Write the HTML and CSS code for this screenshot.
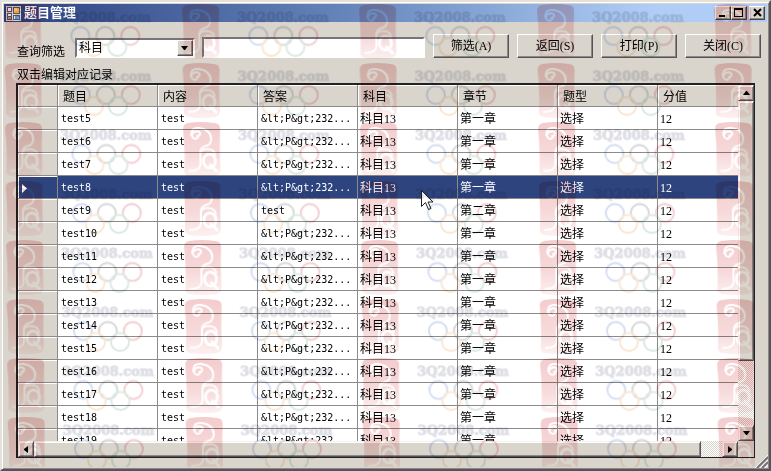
FILE: index.html
```html
<!DOCTYPE html>
<html lang="zh-CN">
<head>
    <meta charset="UTF-8">
    <meta name="viewport" content="width=device-width, initial-scale=1.0">
    <title>题目管理</title>
    <link rel="stylesheet" href="styles.css">
</head>
<body>
<div class="window">
    <div class="title-bar">
        <svg class="app-icon" width="15" height="15" viewBox="0 0 15 15" shape-rendering="crispEdges">
            <path fill="#d9d5cd" d="M0 0h15v15H0z"/>
            <path fill="#4a5a80" d="M1 1h5v5H1zM7 1h7v7H7zM1 7h5v7H1zM7 9h7v5H7z"/>
            <path fill="#ffffff" d="M2 2h3v3H2zM2 8h3v2H2zM8 10h5v3H8z"/>
            <path fill="#f0b830" d="M8 2h5v5H8z"/>
            <path fill="#f8e090" d="M8 2h3v2H8z"/>
            <path fill="#d09828" d="M2 11h3v2H2z"/>
            <path fill="#70a8e8" d="M9 10h4v3H9z"/>
        </svg>
        <h1 class="title">题目管理</h1>
        <button class="caption-btn" type="button" aria-label="最小化">
            <svg width="12" height="10" shape-rendering="crispEdges"><path d="M2 7h6v2H2z"/></svg>
        </button>
        <button class="caption-btn" type="button" aria-label="最大化">
            <svg width="12" height="10" shape-rendering="crispEdges"><path fill-rule="evenodd" d="M1 0h9v9H1zM2 2v6h7V2z"/></svg>
        </button>
        <button class="caption-btn close-btn" type="button" aria-label="关闭">
            <svg width="12" height="10"><path d="M3 1l7 7M10 1l-7 7" fill="none" stroke="#000" stroke-width="2"/></svg>
        </button>
    </div>

    <form class="toolbar">
        <label class="filter-label" for="field">查询筛选</label>
        <span class="select-box">
            <select id="field" class="field-select">
                <option>科目</option>
            </select>
            <span class="select-arrow"><svg width="8" height="4"><path d="M0 0h7L4 4H3z"/></svg></span>
        </span>
        <input class="keyword" type="text" aria-label="查询内容">
        <button class="tool-btn" type="button">筛选(A)</button>
        <button class="tool-btn" type="button">返回(S)</button>
        <button class="tool-btn" type="button">打印(P)</button>
        <button class="tool-btn" type="button">关闭(C)</button>
    </form>

    <p class="hint">双击编辑对应记录</p>

    <div class="grid">
        <div class="grid-view">
            <table class="records">
                <colgroup>
                    <col class="col-mark"><col class="col-data"><col class="col-data"><col class="col-data"><col class="col-data"><col class="col-data"><col class="col-data"><col>
                </colgroup>
                <thead>
                    <tr><th></th><th>题目</th><th>内容</th><th>答案</th><th>科目</th><th>章节</th><th>题型</th><th>分值</th></tr>
                </thead>
                <tbody>
                    <tr><th></th><td class="en">test5</td><td class="en">test</td><td class="en">&amp;lt;P&amp;gt;232...</td><td>科目13</td><td>第一章</td><td>选择</td><td>12</td></tr>
                    <tr><th></th><td class="en">test6</td><td class="en">test</td><td class="en">&amp;lt;P&amp;gt;232...</td><td>科目13</td><td>第一章</td><td>选择</td><td>12</td></tr>
                    <tr><th></th><td class="en">test7</td><td class="en">test</td><td class="en">&amp;lt;P&amp;gt;232...</td><td>科目13</td><td>第一章</td><td>选择</td><td>12</td></tr>
                    <tr class="selected"><th><svg class="row-arrow" width="5" height="9"><path fill="#fff" d="M0 0l5 4.500L0 9z"/></svg></th><td class="en">test8</td><td class="en">test</td><td class="en">&amp;lt;P&amp;gt;232...</td><td>科目13</td><td>第一章</td><td>选择</td><td>12</td></tr>
                    <tr><th></th><td class="en">test9</td><td class="en">test</td><td class="en">test</td><td>科目13</td><td>第二章</td><td>选择</td><td>12</td></tr>
                    <tr><th></th><td class="en">test10</td><td class="en">test</td><td class="en">&amp;lt;P&amp;gt;232...</td><td>科目13</td><td>第一章</td><td>选择</td><td>12</td></tr>
                    <tr><th></th><td class="en">test11</td><td class="en">test</td><td class="en">&amp;lt;P&amp;gt;232...</td><td>科目13</td><td>第一章</td><td>选择</td><td>12</td></tr>
                    <tr><th></th><td class="en">test12</td><td class="en">test</td><td class="en">&amp;lt;P&amp;gt;232...</td><td>科目13</td><td>第一章</td><td>选择</td><td>12</td></tr>
                    <tr><th></th><td class="en">test13</td><td class="en">test</td><td class="en">&amp;lt;P&amp;gt;232...</td><td>科目13</td><td>第一章</td><td>选择</td><td>12</td></tr>
                    <tr><th></th><td class="en">test14</td><td class="en">test</td><td class="en">&amp;lt;P&amp;gt;232...</td><td>科目13</td><td>第一章</td><td>选择</td><td>12</td></tr>
                    <tr><th></th><td class="en">test15</td><td class="en">test</td><td class="en">&amp;lt;P&amp;gt;232...</td><td>科目13</td><td>第一章</td><td>选择</td><td>12</td></tr>
                    <tr><th></th><td class="en">test16</td><td class="en">test</td><td class="en">&amp;lt;P&amp;gt;232...</td><td>科目13</td><td>第一章</td><td>选择</td><td>12</td></tr>
                    <tr><th></th><td class="en">test17</td><td class="en">test</td><td class="en">&amp;lt;P&amp;gt;232...</td><td>科目13</td><td>第一章</td><td>选择</td><td>12</td></tr>
                    <tr><th></th><td class="en">test18</td><td class="en">test</td><td class="en">&amp;lt;P&amp;gt;232...</td><td>科目13</td><td>第一章</td><td>选择</td><td>12</td></tr>
                    <tr><th></th><td class="en">test19</td><td class="en">test</td><td class="en">&amp;lt;P&amp;gt;232...</td><td>科目13</td><td>第一章</td><td>选择</td><td>12</td></tr>
                </tbody>
            </table>
        </div>
        <div class="scroll scroll-v">
            <button class="scroll-btn" type="button" aria-label="向上"><svg width="7" height="4"><path d="M0 4L3 0h1l3 4z"/></svg></button>
            <div class="thumb"></div>
            <div class="track"></div>
            <button class="scroll-btn" type="button" aria-label="向下"><svg width="7" height="4"><path d="M0 0h7L4 4H3z"/></svg></button>
        </div>
        <div class="scroll scroll-h">
            <button class="scroll-btn" type="button" aria-label="向左"><svg width="4" height="7"><path d="M4 0v7L0 4V3z"/></svg></button>
            <div class="thumb"></div>
            <div class="track"></div>
            <button class="scroll-btn" type="button" aria-label="向右"><svg width="4" height="7"><path d="M0 0v7l4-3V3z"/></svg></button>
        </div>
    </div>

    <svg class="size-grip" width="14" height="14">
        <path d="M1 14L14 1M6 14l8-8M11 14l3-3" stroke="#fff" stroke-width="1"/>
        <path d="M3 14L14 3M8 14l6-6" stroke="#77747c" stroke-width="2"/>
    </svg>

    <svg class="cursor" width="12" height="21" viewBox="0 0 12 21">
        <path d="M.5.5v16l4-4 3 7 2.500-1-3-6.500h5z" fill="#fff" stroke="#222"/>
    </svg>

    <!-- repeated site mark, laid over everything -->
    <svg class="watermark" width="100%" height="100%" aria-hidden="true">
        <defs>
            <linearGradient id="seal" x1="0" y1="0" x2="0" y2="1">
                <stop offset="0" stop-color="#f4cccd"/>
                <stop offset="0.6" stop-color="#f7dadb"/>
                <stop offset="1" stop-color="#fdf0f0"/>
            </linearGradient>
            <g id="mark">
                <path fill="url(#seal)" d="M5 1Q18-1 31 1Q37 1 37 7Q36 28 37 47Q37 53 32 54Q18 56 5 54Q0 53 1 47Q2 28 0 7Q0 2 5 1z"/>
                <g fill="none" stroke="#fff" stroke-linecap="round">
                    <path stroke-width="2" d="M14 14Q17 14 17 11Q15 8 11 10Q7 13 10 16Q13 18 15 15"/>
                    <path stroke-width="2" d="M8 13Q8 5 16 6Q28 8 28 17Q28 23 22 24Q16 26 17 33L17 43Q16 49 6 49"/>
                    <path stroke-width="2" d="M17 31Q18 27 24 27Q31 27 32 33"/>
                    <ellipse stroke-width="3" cx="26" cy="39" rx="6" ry="7"/>
                    <path stroke-width="3" d="M27 43l6 6"/>
                </g>
                <text class="mark-text" x="55" y="18">3Q2008.com</text>
                <g fill="none" stroke-width="2">
                    <circle cx="76" cy="32" r="9" stroke="#d6dff3"/>
                    <circle cx="101" cy="32" r="9" stroke="#dadadd"/>
                    <circle cx="126" cy="32" r="9" stroke="#f4d0d3"/>
                    <circle cx="89" cy="43" r="9" stroke="#fae8d6"/>
                    <circle cx="113" cy="43" r="9" stroke="#dcebe2"/>
                </g>
            </g>
            <pattern id="marks" x="4" y="4" width="355" height="59" patternUnits="userSpaceOnUse" patternTransform="skewX(0.5)">
                <use href="#mark"/>
                <use href="#mark" x="178"/>
            </pattern>
        </defs>
        <rect y="4" width="100%" height="100%" fill="url(#marks)"/>
    </svg>
</div>
</body>
</html>
```
FILE: styles.css
```css
* {
    box-sizing: border-box;
}
body {
    margin: 0;
    font-family: "Liberation Serif", "Noto Sans CJK SC", serif;
    font-size: 12px;
    line-height: 14px;
    color: #000;
}
button, input, select {
    font: inherit;
    color: inherit;
    margin: 0;
    padding: 0;
    border-radius: 0;
}
.window {
    position: relative;
    display: flex;
    flex-direction: column;
    height: 100vh;
    padding: 2px;
    overflow: hidden;
    background: #d9d5cd;
    border: 2px solid;
    border-color: #e4e1da #55545a #55545a #e4e1da;
    box-shadow: inset 1px 1px #fff, inset -1px -1px #8c8a86;
}

/* title bar */
.title-bar {
    display: flex;
    align-items: center;
    height: 18px;
    padding: 0 2px;
    background: linear-gradient(to right, #2c4280, #6585bb 45%, #b0cef5 85%);
}
.app-icon {
    margin-right: 3px;
}
.title {
    flex: 1;
    margin: 0;
    font-size: 13px;
    line-height: 18px;
    color: #fff;
}
.caption-btn {
    display: flex;
    width: 16px;
    height: 14px;
    background: #d9d5cd;
    border: 1px solid;
    border-color: #fff #444 #444 #fff;
    box-shadow: inset -1px -1px #8c8a86;
}
.caption-btn svg {
    margin: 1px;
}
.close-btn {
    margin-left: 2px;
}

/* filter row */
.toolbar {
    display: flex;
    align-items: flex-end;
    padding: 12px 6px 0 13px;
}
.filter-label {
    width: 58px;
    line-height: 12px;
}
.select-box {
    position: relative;
    width: 120px;
    height: 20px;
    margin-right: 7px;
}
.field-select {
    appearance: none;
    display: block;
    width: 100%;
    height: 100%;
    padding-left: 2px;
}
.field-select, .keyword {
    background: #fff;
    border: 2px solid;
    border-color: #77757a #fff #fff #77757a;
    outline: none;
}
.select-arrow {
    position: absolute;
    top: 2px;
    right: 2px;
    bottom: 2px;
    display: flex;
    align-items: center;
    justify-content: center;
    width: 16px;
    background: #d9d5cd;
    border: 1px solid;
    border-color: #fff #555 #555 #fff;
    box-shadow: inset -1px -1px #8c8a86;
    pointer-events: none;
}
.keyword {
    flex: 1;
    min-width: 0;
    height: 21px;
}
.tool-btn {
    width: 76px;
    height: 24px;
    margin-left: 8px;
    background: #d9d5cd;
    border: 1px solid;
    border-color: #fff #55545a #55545a #fff;
    box-shadow: inset -1px -1px #8c8a86;
}
.hint {
    margin: 10px 13px 1px;
    line-height: 14px;
}

/* data grid */
.grid {
    flex: 1;
    display: grid;
    grid-template-columns: 1fr 16px;
    grid-template-rows: 1fr 16px;
    min-height: 0;
    margin: 0 12px 9px 12px;
    border: 2px solid #222;
    border-right-width: 1px;
    border-bottom-width: 1px;
}
.grid-view {
    min-height: 0;
    overflow: hidden;
    background: #fff;
}
.records {
    width: 100%;
    table-layout: fixed;
    border-collapse: separate;
    border-spacing: 0;
}
.col-mark {
    width: 40px;
}
.col-data {
    width: 100px;
}
.records th, .records td {
    height: 23px;
    padding: 2px 2px 0;
    text-align: left;
    font-weight: normal;
    white-space: nowrap;
    overflow: hidden;
    border-right: 1px solid #8c8a8a;
    border-bottom: 1px solid #8c8a8a;
}
.records th {
    background: #d9d5cd;
    box-shadow: inset 1px 1px #fff;
}
.records thead th {
    height: 22px;
    padding-left: 5px;
}
.records tr > :last-child {
    border-right: 0;
}
.records .en {
    padding-left: 3px;
    font-family: "DejaVu Sans Mono", monospace;
    font-size: 10px;
}
.records .selected td, .records .selected th {
    background: #2e447f;
    color: #fff;
}
.row-arrow {
    display: block;
    margin-left: 2px;
}

/* scroll bars */
.scroll {
    display: flex;
    background: #d9d5cd;
}
.scroll-v {
    flex-direction: column;
}
.scroll-btn {
    display: flex;
    align-items: center;
    justify-content: center;
    flex: none;
    width: 16px;
    height: 16px;
}
.scroll-btn, .thumb {
    background: #d9d5cd;
    border: 1px solid;
    border-color: #f4f2ee #55545a #55545a #f4f2ee;
    box-shadow: inset 1px 1px #fff, inset -1px -1px #8c8a86;
}
.track {
    background: repeating-conic-gradient(#fff 0 25%, #d9d5cd 0 50%) 0 0 / 2px 2px;
}
.scroll-v .thumb {
    flex: 80;
}
.scroll-v .track {
    flex: 20;
}
.scroll-h .thumb {
    flex: 97;
}
.scroll-h .track {
    flex: 3;
}

/* things floating over the window */
.size-grip {
    position: absolute;
    right: 1px;
    bottom: 1px;
}
.cursor {
    position: absolute;
    left: 419px;
    top: 188px;
}
.watermark {
    position: absolute;
    top: -2px;
    left: -2px;
    mix-blend-mode: multiply;
    pointer-events: none;
}
.mark-text {
    font-family: "DejaVu Serif", serif;
    font-size: 13px;
    font-weight: bold;
    fill: #dfe0e6;
    stroke: #dfe0e6;
}
```
